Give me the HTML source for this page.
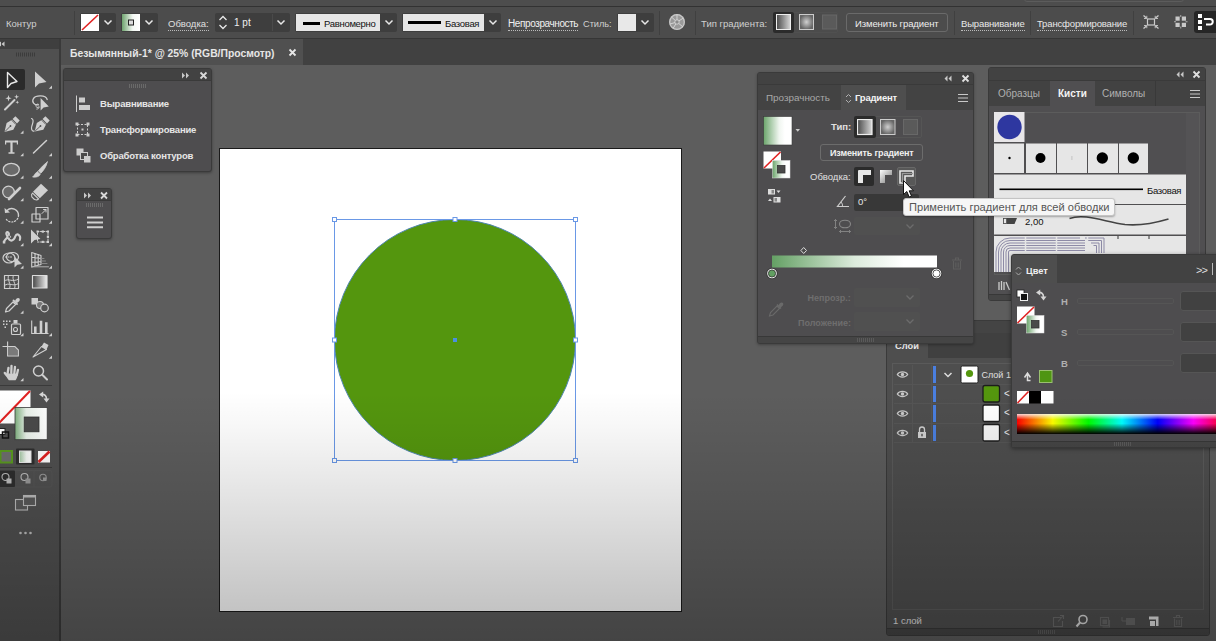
<!DOCTYPE html>
<html lang="ru">
<head>
<meta charset="utf-8">
<title>Illustrator</title>
<style>
*{box-sizing:border-box;margin:0;padding:0}
html,body{width:1216px;height:641px;overflow:hidden;background:#5d5d5d;font-family:"Liberation Sans",sans-serif;font-size:10px;color:#e0e0e0}
.abs{position:absolute}
#app{position:relative;width:1216px;height:641px;overflow:hidden;background:#5d5d5d}
.t{position:absolute;white-space:nowrap;line-height:12px}
/* top */
#strip{left:0;top:0;width:1216px;height:7px;background:#4d4d4d;border-bottom:1px solid #323232}
#ctrl{left:0;top:7px;width:1216px;height:31px;background:#4c4c4c}
#tabs{left:0;top:38px;width:1216px;height:27px;background:#414141;border-top:1px solid #363636}
#tab1{left:61px;top:39px;width:242px;height:26px;background:#505050}
#tools{left:0;top:39px;width:61px;height:602px;background:#505050;border-right:2px solid #3a3a3a}
#toolshead{left:0;top:39px;width:59px;height:10px;background:#3f3f3f}
.dd{position:absolute;background:#3e3e3e;border-radius:2px}
.sep{position:absolute;width:1px;background:#404040;top:11px;height:24px}
.panel{position:absolute;background:#4e4d4f;border:1px solid #3a3a3a;border-radius:3px}
.phead{position:absolute;left:0;top:0;right:0;background:#424242;border-bottom:1px solid #3a3a3a}
.dot{border-bottom:1px dotted #bbb}
</style>
</head>
<body>
<div id="app">

<!-- canvas / artboard -->
<div class="abs" id="artboard" style="left:219px;top:148px;width:463px;height:464px;border:1px solid #1a1a1a;background:#fff"></div>
<svg class="abs" style="left:320px;top:205px" width="270" height="270" viewBox="320 205 270 270">
  <circle cx="455" cy="340" r="120.5" fill="#54960e"/>
  <circle cx="455" cy="340" r="120.5" fill="none" stroke="#4f86b0" stroke-width="1"/>
  <rect x="334.5" y="219.500" width="241" height="241" fill="none" stroke="#6a98e6" stroke-width="1"/>
  <g fill="#fff" stroke="#6a98e6" stroke-width="1">
    <rect x="332.500" y="217.500" width="4" height="4"/><rect x="453" y="217.500" width="4" height="4"/><rect x="573.500" y="217.500" width="4" height="4"/>
    <rect x="332.500" y="338" width="4" height="4"/><rect x="573.500" y="338" width="4" height="4"/>
    <rect x="332.500" y="458.500" width="4" height="4"/><rect x="453" y="458.500" width="4" height="4"/><rect x="573.500" y="458.500" width="4" height="4"/>
  </g>
  <rect x="453" y="338" width="4" height="4" fill="#4a90e2"/>
</svg>

<!-- top bars -->
<div class="abs" id="strip"></div>
<div class="abs" id="ctrl"></div>
<div class="abs" id="tabs"></div>
<div class="abs" id="tab1"></div>
<div class="abs" id="tools"></div>
<div class="abs" id="toolshead"></div>

<!-- CONTROL BAR -->
<div class="t" style="left:6px;top:18px;font-size:9.500px;color:#d0d0d0">Контур</div>
<div class="sep" style="left:74px"></div>
<!-- fill swatch -->
<div class="dd" style="left:80px;top:13px;width:36px;height:19px"></div>
<svg class="abs" style="left:81px;top:14px" width="18" height="17"><rect width="18" height="17" fill="#fff"/><line x1="1" y1="16" x2="17" y2="1" stroke="#e02020" stroke-width="1.6"/></svg>
<svg class="abs chev" style="left:103px;top:19px" width="10" height="7"><path d="M1.500 1.500 L5 5 L8.500 1.500" fill="none" stroke="#e8e8e8" stroke-width="1.500"/></svg>
<!-- stroke swatch -->
<div class="dd" style="left:121px;top:13px;width:37px;height:19px"></div>
<svg class="abs" style="left:122px;top:14px" width="18" height="17"><defs><linearGradient id="gw"><stop offset="0" stop-color="#6fa46f"/><stop offset="0.6" stop-color="#f4f8f4"/><stop offset="1" stop-color="#fff"/></linearGradient></defs><rect width="18" height="17" fill="url(#gw)"/><rect x="6.500" y="6" width="5" height="5" fill="#ddd" stroke="#222" stroke-width="1"/></svg>
<svg class="abs chev" style="left:144px;top:19px" width="10" height="7"><path d="M1.500 1.500 L5 5 L8.500 1.500" fill="none" stroke="#e8e8e8" stroke-width="1.500"/></svg>
<div class="t dot" style="left:168px;top:18px;font-size:9.500px;color:#e0e0e0">Обводка:</div>
<!-- spinner -->
<div class="dd" style="left:215px;top:13px;width:75px;height:19px"></div>
<div class="abs" style="left:272px;top:14px;width:1px;height:17px;background:#4a4a4a"></div>
<svg class="abs" style="left:218px;top:14px" width="10" height="17"><path d="M1.500 6 L5 2.500 L8.500 6 M1.500 11 L5 14.500 L8.500 11" fill="none" stroke="#e8e8e8" stroke-width="1.300"/></svg>
<div class="t" style="left:234px;top:17px;font-size:10px;color:#eee">1 pt</div>
<svg class="abs chev" style="left:276px;top:19px" width="10" height="7"><path d="M1.500 1.500 L5 5 L8.500 1.500" fill="none" stroke="#e8e8e8" stroke-width="1.500"/></svg>
<!-- Равномерно -->
<div class="dd" style="left:295px;top:13px;width:102px;height:19px"></div>
<div class="abs" style="left:296px;top:14px;width:84px;height:17px;background:#e6e6e6"></div>
<div class="abs" style="left:303px;top:22px;width:17px;height:3px;background:#000"></div>
<div class="t" style="left:324px;top:18px;font-size:9.500px;color:#111;letter-spacing:-0.300px">Равномерно</div>
<svg class="abs chev" style="left:384px;top:19px" width="10" height="7"><path d="M1.500 1.500 L5 5 L8.500 1.500" fill="none" stroke="#e8e8e8" stroke-width="1.500"/></svg>
<!-- Базовая -->
<div class="dd" style="left:402px;top:13px;width:99px;height:19px"></div>
<div class="abs" style="left:403px;top:14px;width:81px;height:17px;background:#e6e6e6"></div>
<div class="abs" style="left:408px;top:21px;width:33px;height:3px;background:#000"></div>
<div class="t" style="left:445px;top:18px;font-size:9.500px;color:#111;letter-spacing:-0.300px">Базовая</div>
<svg class="abs chev" style="left:488px;top:19px" width="10" height="7"><path d="M1.500 1.500 L5 5 L8.500 1.500" fill="none" stroke="#e8e8e8" stroke-width="1.500"/></svg>
<div class="t dot" style="left:508px;top:18px;font-size:10px;color:#f0f0f0;letter-spacing:-0.400px">Непрозрачность</div>
<div class="t" style="left:583px;top:18px;font-size:9.200px;color:#d0d0d0">Стиль:</div>
<div class="dd" style="left:617px;top:13px;width:37px;height:19px"></div>
<div class="abs" style="left:618px;top:14px;width:18px;height:17px;background:#e8e8e8"></div>
<svg class="abs chev" style="left:640px;top:19px" width="10" height="7"><path d="M1.500 1.500 L5 5 L8.500 1.500" fill="none" stroke="#e8e8e8" stroke-width="1.500"/></svg>
<div class="sep" style="left:659px"></div>
<svg class="abs" style="left:668px;top:13px" width="18" height="18"><circle cx="9" cy="9" r="8" fill="#9a9a9a"/><circle cx="9" cy="9" r="7.300" fill="none" stroke="#c8c8c8" stroke-width="1.200"/><path d="M9 9 L9 1.500 M9 9 L15.500 5 M9 9 L15 14 M9 9 L5 15.500 M9 9 L2 11 M9 9 L3.500 4" stroke="#d8d8d8" stroke-width="0.900"/><circle cx="9" cy="9" r="2.200" fill="#8a8a8a" stroke="#ddd" stroke-width="0.800"/></svg>
<div class="sep" style="left:695px"></div>
<div class="t" style="left:701px;top:18px;font-size:9.500px;color:#d0d0d0">Тип градиента:</div>
<div class="abs" style="left:773px;top:12px;width:65px;height:21px;border:1px solid #505050;border-radius:2px"></div>
<div class="abs" style="left:773px;top:12px;width:21px;height:21px;background:#2b2b2b;border-radius:2px"></div>
<svg class="abs" style="left:776px;top:14px" width="62" height="17"><defs><linearGradient id="lg1"><stop offset="0" stop-color="#4a4a4a"/><stop offset="1" stop-color="#d8d8d8"/></linearGradient><radialGradient id="rg1"><stop offset="0" stop-color="#d0d0d0"/><stop offset="1" stop-color="#666"/></radialGradient></defs><rect x="0.500" y="0.500" width="14" height="15" fill="url(#lg1)" stroke="#eee" stroke-width="1"/><rect x="23.500" y="0.500" width="14" height="15" fill="url(#rg1)" stroke="#ccc" stroke-width="1"/><rect x="46.500" y="1" width="14" height="14" fill="#5a5a5a" stroke="#666" stroke-width="1"/></svg>
<div class="abs" style="left:846px;top:13px;width:102px;height:19px;border:1px solid #6a6a6a;border-radius:3px"></div>
<div class="t" style="left:855px;top:18px;font-size:9.500px;color:#eee;letter-spacing:-0.100px">Изменить градиент</div>
<div class="sep" style="left:954px"></div>
<div class="t dot" style="left:961px;top:18px;font-size:9.500px;color:#e8e8e8;letter-spacing:-0.150px">Выравнивание</div>
<div class="sep" style="left:1030px"></div>
<div class="t dot" style="left:1037px;top:18px;font-size:9.500px;color:#e8e8e8;letter-spacing:-0.150px">Трансформирование</div>
<div class="sep" style="left:1133px"></div>
<svg class="abs" style="left:1142px;top:14px" width="18" height="17"><rect x="5.500" y="5" width="7" height="6" fill="none" stroke="#ccc" stroke-width="1.200"/><path d="M1.500 1.500 L4.500 4 M16.500 1.500 L13.500 4 M1.500 14.500 L4.500 12 M16.500 14.500 L13.500 12" stroke="#ccc" stroke-width="1.300"/><path d="M2 4.500 L4.800 4.500 L4.800 1.800 M16 4.500 L13.200 4.500 L13.200 1.800 M2 11.500 L4.800 11.500 L4.800 14.200 M16 11.500 L13.200 11.500 L13.200 14.200" fill="none" stroke="#ccc" stroke-width="0.900"/></svg>
<svg class="abs" style="left:1174px;top:15px" width="14" height="14"><g fill="#c8c8c8"><rect x="1.500" y="1.500" width="4.200" height="4.200"/><rect x="7.800" y="1.500" width="4.200" height="4.200"/><rect x="1.500" y="7.800" width="4.200" height="4.200"/><rect x="7.800" y="7.800" width="4.200" height="4.200"/></g><path d="M6.750 0 v2 M6.750 11.500 v2 M0 6.750 h2 M11.500 6.750 h2" stroke="#c8c8c8" stroke-width="0.800"/></svg>
<div class="abs" style="left:1194px;top:11px;width:22px;height:22px;background:#262626;border-radius:3px 0 0 3px"></div>
<svg class="abs" style="left:1196px;top:13px" width="20" height="18"><g fill="#fff"><rect x="2" y="1" width="4" height="4"/><rect x="2" y="7" width="4" height="4"/><rect x="2" y="13" width="4" height="4"/></g><path d="M8 6 L14 6 A2.500 2.500 0 0 1 14 11.500 L10 11.500" fill="none" stroke="#fff" stroke-width="2"/></svg>
<!-- search box partial in top strip -->
<div class="abs" style="left:1024px;top:-8px;width:160px;height:10px;border:1px solid #5c5c5c;border-radius:3px"></div>

<div class="t" style="left:70px;top:48px;font-size:10.350px;font-weight:bold;color:#e6e6e6">Безымянный-1* @ 25% (RGB/Просмотр)</div>
<svg class="abs" style="left:288px;top:48px" width="9" height="9"><path d="M1.500 1.500 L7.500 7.500 M7.500 1.500 L1.500 7.500" stroke="#e6e6e6" stroke-width="1.800"/></svg>

<!-- LEFT FLOATING PANEL 1 -->
<div class="panel" style="left:63px;top:68px;width:149px;height:104px;box-shadow:0 1px 3px rgba(0,0,0,.35)">
  <div class="phead" style="height:12px;border-radius:2px 2px 0 0"></div>
  <svg class="abs" style="left:117px;top:2px" width="30" height="9"><path d="M1 1.500 L4 4.500 L1 7.500 Z M5 1.500 L8 4.500 L5 7.500 Z" fill="#c8c8c8"/><path d="M19.500 1.500 L25.500 7.500 M25.500 1.500 L19.500 7.500" stroke="#d8d8d8" stroke-width="1.800"/></svg>
  <svg class="abs" style="left:64px;top:15px" width="20" height="5"><path d="M1.500 0v4M3.500 0v4M5.500 0v4M7.500 0v4M9.500 0v4M11.500 0v4M13.500 0v4M15.500 0v4M17.500 0v4" stroke="#6a6a6a" stroke-width="1"/></svg>
  <svg class="abs" style="left:11px;top:26px" width="18" height="18"><path d="M1.500 0.500 V17" stroke="#ccc" stroke-width="1"/><rect x="4" y="2.500" width="6" height="5" fill="#ccc"/><rect x="4" y="10" width="11" height="5" fill="#ccc"/></svg>
  <div class="t" style="left:36px;top:29px;font-size:9.500px;font-weight:bold;color:#e6e6e6;letter-spacing:-0.200px">Выравнивание</div>
  <svg class="abs" style="left:10px;top:52px" width="18" height="18"><rect x="3.500" y="3.500" width="10" height="10" fill="none" stroke="#ccc" stroke-width="1" stroke-dasharray="2 1.500"/><g fill="#ccc"><rect x="1.500" y="1.500" width="3" height="3"/><rect x="12.500" y="1.500" width="3" height="3"/><rect x="1.500" y="12.500" width="3" height="3"/><rect x="12.500" y="12.500" width="3" height="3"/><rect x="7.500" y="7.500" width="2" height="2"/></g></svg>
  <div class="t" style="left:36px;top:55px;font-size:9.500px;font-weight:bold;color:#e6e6e6;letter-spacing:-0.200px">Трансформирование</div>
  <svg class="abs" style="left:11px;top:78px" width="18" height="18"><rect x="1.500" y="1.500" width="7" height="7" fill="#ccc"/><rect x="5.500" y="5.500" width="7" height="7" fill="#4a4a4a" stroke="#ccc" stroke-width="1"/><rect x="9" y="9" width="6.500" height="6.500" fill="#ccc"/></svg>
  <div class="t" style="left:36px;top:81px;font-size:9.500px;font-weight:bold;color:#e6e6e6;letter-spacing:-0.200px">Обработка контуров</div>
</div>
<!-- LEFT FLOATING PANEL 2 -->
<div class="panel" style="left:76px;top:188px;width:36px;height:51px;box-shadow:0 1px 3px rgba(0,0,0,.35)">
  <div class="phead" style="height:12px;border-radius:2px 2px 0 0"></div>
  <svg class="abs" style="left:6px;top:2px" width="28" height="9"><path d="M1 1.500 L4 4.500 L1 7.500 Z M5 1.500 L8 4.500 L5 7.500 Z" fill="#c8c8c8"/><path d="M18 1.500 L24 7.500 M24 1.500 L18 7.500" stroke="#d8d8d8" stroke-width="1.800"/></svg>
  <svg class="abs" style="left:8px;top:14px" width="20" height="5"><path d="M1.500 0v4M3.500 0v4M5.500 0v4M7.500 0v4M9.500 0v4M11.500 0v4M13.500 0v4M15.500 0v4M17.500 0v4" stroke="#6a6a6a" stroke-width="1"/></svg>
  <svg class="abs" style="left:9px;top:26px" width="18" height="14"><path d="M1 2.500 H17 M1 7.500 H17 M1 12.200 H17" stroke="#d0d0d0" stroke-width="2"/></svg>
</div>

<!-- LAYERS PANEL -->
<div class="panel" id="layers" style="left:886px;top:320px;width:324px;height:316px;border-radius:3px;background:#4e4e4e">
  <div class="abs" style="left:0;top:0;width:322px;height:12px;background:#444;border-radius:2px 2px 0 0"></div>
  <div class="abs" style="left:0;top:12px;width:322px;height:25px;background:#404040"></div>
  <div class="abs" style="left:0;top:12px;width:41px;height:25px;background:#4e4e4e"></div>
  <div class="abs" id="layin" style="left:0;top:10px;width:322px;height:304px">
  <div class="t" style="left:8px;top:9px;font-size:9.300px;font-weight:bold;color:#f0f0f0">Слои</div>
  <div class="abs" style="left:5px;top:32px;width:312px;height:247px;border:1px solid #5a5a5a"></div>
  <!-- rows -->
  <div class="abs" style="left:7px;top:53px;width:309px;height:1px;background:#555"></div>
  <div class="abs" style="left:7px;top:72px;width:309px;height:1px;background:#555"></div>
  <div class="abs" style="left:7px;top:92px;width:309px;height:1px;background:#555"></div>
  <div class="abs" style="left:7px;top:111px;width:309px;height:1px;background:#555"></div>
  <div class="abs" style="left:25px;top:34px;width:1px;height:77px;background:#555"></div>
  <div class="abs" style="left:44px;top:34px;width:1px;height:77px;background:#555"></div>
  <div class="abs" style="left:46px;top:35px;width:3px;height:17px;background:#4a7fe0"></div>
  <div class="abs" style="left:46px;top:55px;width:3px;height:16px;background:#4a7fe0"></div>
  <div class="abs" style="left:46px;top:74px;width:3px;height:17px;background:#4a7fe0"></div>
  <div class="abs" style="left:46px;top:94px;width:3px;height:16px;background:#4a7fe0"></div>
  <svg class="abs" style="left:0;top:30px" width="130" height="85">
    <defs><g id="eye"><path d="M-5.200 0 C-3 -3.400 3 -3.400 5.200 0 C3 3.400 -3 3.400 -5.200 0 Z" fill="none" stroke="#c8c8c8" stroke-width="1.200"/><circle cx="0" cy="0" r="1.700" fill="#c8c8c8"/></g></defs>
    <use href="#eye" x="15.500" y="13.500"/><use href="#eye" x="15.500" y="33"/><use href="#eye" x="15.500" y="52.500"/><use href="#eye" x="15.500" y="72"/>
    <path d="M32.500 71 v-2.500 a2.500 2.500 0 0 1 5 0 v2.500" fill="none" stroke="#cfcfcf" stroke-width="1.300"/><rect x="31" y="71" width="8" height="6" fill="#cfcfcf"/><rect x="34.300" y="72.800" width="1.400" height="2.500" fill="#4a4a4a"/>
    <path d="M57.500 12 L61 15.500 L64.500 12" fill="none" stroke="#ddd" stroke-width="1.500"/>
    <rect x="74" y="5" width="17" height="17" rx="1.500" fill="#fff" stroke="#222" stroke-width="1"/><circle cx="82.500" cy="12.500" r="3.600" fill="#54960e"/>
    <rect x="96" y="24.500" width="16.500" height="16.500" rx="2" fill="#54960e" stroke="#1c1c1c" stroke-width="1.300"/>
    <rect x="96" y="44" width="16.500" height="16.500" rx="1.500" fill="#fff" stroke="#1c1c1c" stroke-width="1.300"/>
    <rect x="96" y="63.500" width="16.500" height="16.500" rx="1.500" fill="#f4f4f4" stroke="#1c1c1c" stroke-width="1.300"/>
  </svg>
  <div class="t" style="left:94.500px;top:38px;font-size:9px;color:#e0e0e0">Слой 1</div>
  <div class="t" style="left:117px;top:57px;font-size:10px;color:#e8e8e8;width:6px;overflow:hidden">&lt;Эллипс&gt;</div>
  <div class="t" style="left:117px;top:76px;font-size:10px;color:#e8e8e8;width:6px;overflow:hidden">&lt;Контур&gt;</div>
  <div class="t" style="left:117px;top:96px;font-size:10px;color:#e8e8e8;width:6px;overflow:hidden">&lt;Контур&gt;</div>
  <div class="t" style="left:6px;top:284px;font-size:9.500px;color:#e0e0e0">1 слой</div>
  <svg class="abs" style="left:160px;top:281px" width="150" height="18">
    <g fill="none" stroke="#6a6a6a" stroke-width="1.100"><path d="M14 5.500 H6.500 V14.500 H15.500 V9"/><path d="M11 9.500 L16.500 3.500 M13 3.500 H16.500 V7"/></g>
    <circle cx="36" cy="7.500" r="4" fill="none" stroke="#d8d8d8" stroke-width="1.600"/><path d="M33 10.500 L29.500 14.500" stroke="#d8d8d8" stroke-width="2"/>
    <g fill="none" stroke="#666" stroke-width="1.100"><rect x="53.500" y="5.500" width="8" height="8"/><rect x="56" y="8" width="3.500" height="3.500" fill="#666"/><path d="M62.500 8 v7 h-7"/></g>
    <g fill="#666"><path d="M75 5 v4 h4" fill="none" stroke="#666"/><rect x="79" y="6" width="9" height="7"/></g>
    <path d="M102 4.500 H111.500 V14 H109 V7.500 H102 Z" fill="#e0e0e0"/><path d="M103 9 H108 V14 H103 Z" fill="#e0e0e0"/>
    <g fill="none" stroke="#666" stroke-width="1.100"><path d="M127.500 6.500 V14.500 H134.500 V6.500 M126 5.500 H136 M129.500 5 V3.500 H132.500 V5 M129.800 8 V13 M132.200 8 V13"/></g>
  </svg>
  <div class="abs" style="left:0;top:297px;width:322px;height:7px;background:#444;border-top:1px solid #383838;border-radius:0 0 3px 3px"></div>
  <svg class="abs" style="left:150px;top:299px" width="20" height="4"><path d="M1.500 0v4M3.500 0v4M5.500 0v4M7.500 0v4M9.500 0v4M11.500 0v4M13.500 0v4M15.500 0v4M17.500 0v4" stroke="#5a5a5a" stroke-width="1"/></svg>
  </div>
</div>

<!-- BRUSHES PANEL -->
<div class="panel" id="brushes" style="left:988px;top:67px;width:218px;height:234px;background:#504f51">
  <div class="phead" style="height:13px;border-radius:2px 2px 0 0"></div>
  <div class="abs" style="left:0;top:13px;width:216px;height:25px;background:#424242"></div>
  <div class="abs" style="left:61px;top:13px;width:45px;height:25px;background:#504f51"></div>
  <div class="abs" style="left:166px;top:13px;width:1px;height:25px;background:#393939"></div>
  <svg class="abs" style="left:186px;top:2px" width="28" height="10"><path d="M4.500 1.500 L1.500 4.500 L4.500 7.500 Z M8.500 1.500 L5.500 4.500 L8.500 7.500 Z" fill="#c8c8c8"/><path d="M18.500 1.500 L24.500 7.500 M24.500 1.500 L18.500 7.500" stroke="#e0e0e0" stroke-width="1.800"/></svg>
  <div class="t" style="left:9px;top:20px;font-size:10px;color:#b0b0b0">Образцы</div>
  <div class="t" style="left:69px;top:20px;font-size:10px;font-weight:bold;color:#f4f4f4">Кисти</div>
  <div class="t" style="left:113px;top:20px;font-size:10px;color:#b0b0b0">Символы</div>
  <svg class="abs" style="left:200px;top:21px" width="12" height="10"><path d="M1 1.500 H11 M1 5 H11 M1 8.500 H11" stroke="#c8c8c8" stroke-width="1.200"/></svg>
  <!-- list -->
  <div class="abs" style="left:5px;top:44px;width:206px;height:163px;border:1px solid #5c5c5c"></div>
  <div class="abs" style="left:197px;top:45px;width:13px;height:161px;background:#545355"></div>
  <svg class="abs" style="left:5px;top:44px" width="194" height="160" viewBox="994 112 194 160">
    <rect x="994" y="112" width="30.500" height="30" fill="#e8e6e8"/>
    <circle cx="1009.500" cy="127" r="12.200" fill="#2e37a0"/>
    <g fill="#e6e6e6"><rect x="994" y="143.500" width="30" height="29.500"/><rect x="1026" y="143.500" width="30" height="29.500"/><rect x="1057" y="143.500" width="30" height="29.500"/><rect x="1088" y="143.500" width="30" height="29.500"/><rect x="1119" y="143.500" width="29" height="29.500"/></g>
    <circle cx="1009.500" cy="158" r="1.200" fill="#000"/><circle cx="1040.500" cy="158" r="5" fill="#000"/><rect x="1071.500" y="156" width="0.800" height="4" fill="#bbb"/><circle cx="1102.300" cy="158" r="5.700" fill="#000"/><circle cx="1133.300" cy="158" r="5.700" fill="#000"/>
    <rect x="994" y="174.500" width="192" height="29.500" fill="#e6e6e6"/>
    <rect x="999.500" y="188.500" width="143.500" height="1.600" fill="#000"/>
    <rect x="994" y="205" width="192" height="29.500" fill="#e6e6e6"/>
    <path d="M1003 218 H1017 L1014.500 224 H1003 Z" fill="#444"/><rect x="1003.500" y="218.500" width="3" height="5" fill="#e6e6e6" stroke="#444" stroke-width="0.600"/>
    <path d="M1069.500 218.500 C1085 213 1105 222 1125 224.500 C1140 226 1155 223 1168.500 219" fill="none" stroke="#444" stroke-width="1.600"/>
    <rect x="994" y="236" width="192" height="36" fill="#e6e6e6"/>
    <g fill="none" stroke="#8d8aa6" stroke-width="1">
      <path d="M996 272 V252 A14 14 0 0 1 1010 238 H1080"/><path d="M998.500 272 V252 A11.500 11.500 0 0 1 1010 240.500 H1085"/><path d="M1001 272 V252 A9 9 0 0 1 1010 243 H1085"/><path d="M1003.500 272 V252 A6.500 6.500 0 0 1 1010 245.500 H1085"/><path d="M1006 272 V252 A4 4 0 0 1 1010 248 H1085"/><path d="M1008.500 272 V252 A1.500 1.500 0 0 1 1010 250.500 H1085"/>
      <path d="M1085 238 H1104 V253 M1088 240.500 H1101.500 V253 M1091 243 H1099 V253 M1093.500 245.500 H1096.500 V253"/>
    </g>
    <g stroke="#e6e6e6" stroke-width="1.500"><path d="M1025.500 237 V253 M1056.500 237 V253 M1087.500 237 V253"/></g>
    <g stroke="#333" stroke-width="1"><path d="M1118 236 V239 M1149 236 V239"/></g>
  </svg>
  <div class="t" style="left:158px;top:117px;font-size:9.500px;color:#111;letter-spacing:-0.300px">Базовая</div>
  <div class="t" style="left:36px;top:148px;font-size:9.500px;color:#111">2,00</div>
  <div class="abs" style="left:0;top:226px;width:216px;height:6px;background:#454545;border-top:1px solid #383838;border-radius:0 0 2px 2px"></div>
  <svg class="abs" style="left:9px;top:211px" width="14" height="12"><path d="M1 11 V3 M3.500 11 V2 M6 11 V3 M8 3 L11.500 11" stroke="#ccc" stroke-width="1.300" fill="none"/></svg>
</div>

<!-- GRADIENT PANEL -->
<div class="panel" id="gradp" style="left:757px;top:72px;width:217px;height:272px;box-shadow:0 1px 3px rgba(0,0,0,.3)">
  <div class="phead" style="height:12px;border-radius:2px 2px 0 0"></div>
  <div class="abs" style="left:0;top:-1px;width:215px;height:271px">
  <div class="abs" style="left:0;top:13px;width:215px;height:25px;background:#434343"></div>
  <div class="abs" style="left:83px;top:13px;width:65px;height:25px;background:#4e4e4e"></div>
  <svg class="abs" style="left:185px;top:2px" width="28" height="10"><path d="M4.500 1.500 L1.500 4.500 L4.500 7.500 Z M8.500 1.500 L5.500 4.500 L8.500 7.500 Z" fill="#c8c8c8"/><path d="M19.500 1.500 L25.500 7.500 M25.500 1.500 L19.500 7.500" stroke="#e0e0e0" stroke-width="1.800"/></svg>
  <div class="t" style="left:8px;top:20px;font-size:9.900px;color:#a8a8a8">Прозрачность</div>
  <svg class="abs" style="left:87px;top:21px" width="7" height="11"><path d="M1 4 L3.500 1.500 L6 4 M1 7 L3.500 9.500 L6 7" fill="none" stroke="#b0b0b0" stroke-width="1"/></svg>
  <div class="t" style="left:97px;top:20px;font-size:9.500px;font-weight:bold;color:#f4f4f4;letter-spacing:-0.200px">Градиент</div>
  <svg class="abs" style="left:199px;top:21px" width="12" height="10"><path d="M1 1.500 H11 M1 5 H11 M1 8.500 H11" stroke="#c8c8c8" stroke-width="1.200"/></svg>
  <!-- swatch -->
  <svg class="abs" style="left:4.500px;top:44px" width="40" height="95">
    <defs><linearGradient id="gp1"><stop offset="0" stop-color="#6ba56b"/><stop offset="0.550" stop-color="#f0f6f0"/><stop offset="0.750" stop-color="#fff"/></linearGradient></defs>
    <rect x="0.500" y="0.500" width="28.500" height="28.500" fill="url(#gp1)" stroke="#3a3a3a" stroke-width="0.600"/>
    <path d="M32.500 13 h4.500 l-2.250 2.800 z" fill="#ccc"/>
    <rect x="0.500" y="35.500" width="17.500" height="17" fill="#fff"/><path d="M1 52 L17.500 36" stroke="#e02020" stroke-width="1.600"/>
    <rect x="9.500" y="44.500" width="17.500" height="17.500" fill="url(#gp1)" stroke="#ddd" stroke-width="0.500"/>
    <rect x="14.500" y="49.500" width="7.500" height="7.500" fill="#4a4a4a" stroke="#333" stroke-width="0.800"/>
    <g><rect x="5.500" y="73.500" width="6" height="4.500" fill="#888" stroke="#ddd" stroke-width="1"/><rect x="5.500" y="73.500" width="3" height="4.500" fill="#ddd"/><path d="M13.500 74.500 h4 l-2 2.500z" fill="#ddd"/>
    <rect x="11" y="81.500" width="6" height="4.500" fill="#888" stroke="#ddd" stroke-width="1"/><rect x="14" y="81.500" width="3" height="4.500" fill="#ddd"/><path d="M5 85 h4 l-2 -2.500z" fill="#ddd"/></g>
  </svg>
  <div class="t" style="left:73px;top:49px;font-size:9.500px;font-weight:bold;color:#e0e0e0">Тип:</div>
  <div class="abs" style="left:96px;top:44px;width:68px;height:22px;border:1px solid #555;border-radius:2px"></div>
  <div class="abs" style="left:96px;top:44px;width:22px;height:22px;background:#2b2b2b;border-radius:2px"></div>
  <svg class="abs" style="left:99px;top:47px" width="64" height="17"><rect x="0.500" y="0.500" width="14.500" height="15" fill="url(#lg1)" stroke="#eee" stroke-width="1.200"/><rect x="23.500" y="0.500" width="14.500" height="15" fill="url(#rg1)" stroke="#ccc" stroke-width="1"/><rect x="46.500" y="0.500" width="14" height="15" fill="#5a5a5a" stroke="#686868" stroke-width="1"/></svg>
  <div class="abs" style="left:62px;top:72px;width:103px;height:17px;border:1px solid #6c6c6c;border-radius:3px"></div>
  <div class="t" style="left:72px;top:75px;font-size:9px;font-weight:bold;color:#f0f0f0;letter-spacing:-0.150px">Изменить градиент</div>
  <div class="t" style="left:52px;top:99px;font-size:9.500px;color:#e0e0e0">Обводка:</div>
  <div class="abs" style="left:96px;top:95px;width:20px;height:19px;background:#2b2b2b;border-radius:2px"></div>
  <div class="abs" style="left:139px;top:95px;width:19px;height:19px;background:#585858;border:1px solid #686868;border-radius:2px"></div>
  <svg class="abs" style="left:98px;top:96px" width="62" height="17">
    <defs><linearGradient id="sg1" x1="0" y1="0" x2="1" y2="1"><stop offset="0" stop-color="#fff"/><stop offset="1" stop-color="#777"/></linearGradient></defs>
    <path d="M2 15 V3 Q2 2 3 2 H15 V7 H7 V15 Z" fill="#e8e8e8"/>
    <path d="M24 15 V2 H36 V7 H29 V15 Z" fill="url(#sg1)"/>
    <path d="M44 15 V3 H57 V8 H49 V15 Z" fill="none" stroke="#e8e8e8" stroke-width="1.600"/><path d="M46.500 15 V5.500 H57" fill="none" stroke="#999" stroke-width="1.200"/>
  </svg>
  <svg class="abs" style="left:78px;top:122px" width="16" height="14"><path d="M13 12.500 H1.500 L9.500 2" fill="none" stroke="#ccc" stroke-width="1.200"/><path d="M6.500 12.500 A5 5 0 0 0 5 8" fill="none" stroke="#ccc" stroke-width="1"/></svg>
  <div class="abs" style="left:96px;top:122px;width:65px;height:17px;background:#383838;border-radius:2px"></div>
  <div class="t" style="left:100px;top:124px;font-size:9.500px;color:#e8e8e8">0°</div>
  <svg class="abs" style="left:75px;top:146px" width="20" height="16"><ellipse cx="12" cy="6" rx="5.500" ry="3.800" fill="none" stroke="#888" stroke-width="1.100"/><path d="M2.500 1.500 V10.500 M1 3 L2.500 1.500 L4 3 M1 9 L2.500 10.500 L4 9 M6.500 13.500 H17.500 M8 12 L6.500 13.500 L8 15 M16 12 L17.500 13.500 L16 15" fill="none" stroke="#888" stroke-width="0.900"/></svg>
  <div class="abs" style="left:96px;top:145px;width:66px;height:18px;background:#505050;border-radius:2px"></div>
  <svg class="abs" style="left:147px;top:151px" width="10" height="7"><path d="M1.500 1.500 L5 5 L8.500 1.500" fill="none" stroke="#6c6c6c" stroke-width="1.300"/></svg>
  <!-- slider -->
  <svg class="abs" style="left:0;top:169px" width="215" height="45">
    <defs><linearGradient id="gp2"><stop offset="0" stop-color="#64a064"/><stop offset="0.500" stop-color="#dcebdc"/><stop offset="0.800" stop-color="#fff"/></linearGradient></defs>
    <path d="M45.700 6.500 L48.500 9.500 L45.700 12.500 L42.900 9.500 Z" fill="#4a4a4a" stroke="#ddd" stroke-width="1"/>
    <rect x="14" y="14.500" width="165" height="12" fill="url(#gp2)"/>
    <circle cx="14" cy="32.500" r="5.800" fill="#3a3a3a"/><circle cx="14" cy="32.500" r="4.800" fill="#fff"/><circle cx="14" cy="32.500" r="3.600" fill="#62a062" stroke="#2a2a2a" stroke-width="0.800"/>
    <circle cx="178.500" cy="32.500" r="5.800" fill="#3a3a3a"/><circle cx="178.500" cy="32.500" r="4.800" fill="#fff"/><circle cx="178.500" cy="32.500" r="3.600" fill="#fff" stroke="#2a2a2a" stroke-width="0.800"/>
    <g fill="none" stroke="#5e5e5e" stroke-width="1.100"><path d="M195.500 20 V28 H202.500 V20 M194 19 H204 M197.500 18.500 V17 H200.500 V18.500 M197.800 21.500 V26.500 M200.200 21.500 V26.500"/></g>
  </svg>
  <svg class="abs" style="left:9px;top:228px" width="18" height="18"><path d="M2.500 16 L3.500 12.500 L10 6 L12.500 8.500 L6 15 Z" fill="none" stroke="#6a6a6a" stroke-width="1.100"/><path d="M10 4.500 L14 8.500" stroke="#6a6a6a" stroke-width="1.600"/><path d="M11.500 5.500 C12.500 3 14.500 1.500 16 3 C17 4.500 15.500 6.500 13.500 7.500 Z" fill="#6a6a6a"/></svg>
  <div class="t" style="left:49.500px;top:220px;font-size:9px;font-weight:bold;color:#6e6e6e">Непрозр.:</div>
  <div class="abs" style="left:96px;top:216px;width:66px;height:19px;background:#505050;border-radius:2px"></div>
  <svg class="abs" style="left:147px;top:222px" width="10" height="7"><path d="M1.500 1.500 L5 5 L8.500 1.500" fill="none" stroke="#6c6c6c" stroke-width="1.300"/></svg>
  <div class="t" style="left:40px;top:245px;font-size:9px;font-weight:bold;color:#6e6e6e">Положение:</div>
  <div class="abs" style="left:96px;top:240px;width:66px;height:19px;background:#505050;border-radius:2px"></div>
  <svg class="abs" style="left:147px;top:246px" width="10" height="7"><path d="M1.500 1.500 L5 5 L8.500 1.500" fill="none" stroke="#6c6c6c" stroke-width="1.300"/></svg>
  <div class="abs" style="left:0;top:264px;width:215px;height:7px;background:#454545;border-top:1px solid #383838;border-radius:0 0 2px 2px"></div>
  <svg class="abs" style="left:98px;top:266px" width="20" height="4"><path d="M1.500 0v4M3.500 0v4M5.500 0v4M7.500 0v4M9.500 0v4M11.500 0v4M13.500 0v4M15.500 0v4M17.500 0v4" stroke="#5a5a5a" stroke-width="1"/></svg>
</div>
</div>

<!-- COLOR PANEL -->
<div class="panel" id="colorp" style="left:1011px;top:254px;width:215px;height:194px;box-shadow:0 1px 4px rgba(0,0,0,.4)">
  <div class="abs" style="left:0;top:0;width:213px;height:28px;background:#424242"></div>
  <div class="abs" style="left:0;top:0;width:45px;height:28px;background:#4e4e4e;border-radius:2px 0 0 0"></div>
  <svg class="abs" style="left:3px;top:10px" width="7" height="12"><path d="M1 4.500 L3.500 2 L6 4.500 M1 7.500 L3.500 10 L6 7.500" fill="none" stroke="#aaa" stroke-width="1"/></svg>
  <div class="t" style="left:14px;top:10px;font-size:9.200px;font-weight:bold;color:#f0f0f0">Цвет</div>
  <div class="t" style="left:184px;top:9px;font-size:11px;color:#ddd;letter-spacing:-1px">&gt;&gt;</div>
  <div class="abs" style="left:200px;top:8px;width:1px;height:12px;background:#bbb"></div>
  <svg class="abs" style="left:0;top:30px" width="60" height="125">
    <rect x="5" y="5" width="7" height="7" fill="#fff" stroke="#222" stroke-width="0.800"/><rect x="8.500" y="8.500" width="7" height="7" fill="#111" stroke="#eee" stroke-width="1"/>
    <path d="M26.500 7.500 C29.500 7 31.500 9 31.500 12" fill="none" stroke="#d4d4d4" stroke-width="1.600"/><path d="M24 7.500 L28.200 4.500 L28.200 10.500 Z M31.500 15.500 L28.500 11.500 L34.500 11.500 Z" fill="#d4d4d4"/>
    <rect x="5" y="21.500" width="17.500" height="17" fill="#fff"/><path d="M5.500 38 L22 22" stroke="#e02020" stroke-width="1.600"/>
    <rect x="14.500" y="30.500" width="17.500" height="17.500" fill="url(#gp1)" stroke="#ddd" stroke-width="0.500"/>
    <rect x="19.500" y="35.500" width="7.500" height="7.500" fill="#4a4a4a" stroke="#333" stroke-width="0.800"/>
    <path d="M12.500 92.500 L15.500 88 L18.500 92.500 M15.500 88.500 V95.500 H18.500" fill="none" stroke="#ddd" stroke-width="1.500"/>
    <rect x="27.500" y="85.500" width="12.500" height="12" fill="#4f9512" stroke="#9ac070" stroke-width="1"/>
    <rect x="5" y="106" width="12" height="12.500" fill="#fff"/><path d="M5.500 118 L16.500 106.500" stroke="#e02020" stroke-width="1.600"/>
    <rect x="17" y="106" width="12" height="12.500" fill="#000"/><rect x="29" y="106" width="12.500" height="12.500" fill="#fff"/>
  </svg>
  <div class="t" style="left:49px;top:41px;font-size:9.500px;font-weight:bold;color:#b0b0b0">H</div>
  <div class="t" style="left:49px;top:72px;font-size:9.500px;font-weight:bold;color:#b0b0b0">S</div>
  <div class="t" style="left:49px;top:103px;font-size:9.500px;font-weight:bold;color:#b0b0b0">B</div>
  <div class="abs" style="left:65px;top:43px;width:97px;height:6px;border:1px solid #555;border-radius:2px"></div>
  <div class="abs" style="left:65px;top:74px;width:97px;height:6px;border:1px solid #555;border-radius:2px"></div>
  <div class="abs" style="left:65px;top:105px;width:97px;height:6px;border:1px solid #555;border-radius:2px"></div>
  <div class="abs" style="left:168px;top:36px;width:40px;height:20px;background:#414141;border:1px solid #555;border-radius:3px"></div>
  <div class="abs" style="left:168px;top:67px;width:40px;height:20px;background:#414141;border:1px solid #555;border-radius:3px"></div>
  <div class="abs" style="left:168px;top:98px;width:40px;height:20px;background:#414141;border:1px solid #555;border-radius:3px"></div>
  <div class="abs" style="left:5px;top:159px;width:210px;height:20px;background:linear-gradient(to bottom,rgba(255,255,255,0.850) 0%,rgba(255,255,255,0) 28%,rgba(0,0,0,0) 48%,rgba(0,0,0,1) 100%),linear-gradient(to right,#f00 0%,#ff0 17%,#0f0 34%,#0ff 50%,#00f 67%,#f0f 84%,#f00 100%)"></div>
  <div class="abs" style="left:0;top:186px;width:213px;height:6px;background:#454545;border-top:1px solid #383838"></div>
  <svg class="abs" style="left:101px;top:187px" width="20" height="4"><path d="M1.500 0v4M3.500 0v4M5.500 0v4M7.500 0v4M9.500 0v4M11.500 0v4M13.500 0v4M15.500 0v4M17.500 0v4" stroke="#5a5a5a" stroke-width="1"/></svg>
</div>

<!-- TOOLTIP -->
<div class="abs" style="left:903px;top:198px;width:212px;height:18px;background:#f6f6f6;border:1px solid #c4c4c4;border-radius:3px;box-shadow:0 1px 2px rgba(0,0,0,.3)"></div>
<div class="t" style="left:909px;top:201px;font-size:11.100px;color:#555">Применить градиент для всей обводки</div>
<!-- CURSOR -->
<svg class="abs" style="left:901px;top:179px" width="14" height="20"><path d="M2.500 1.500 V15.500 L5.800 12.500 L8.200 18 L10.500 17 L8.200 11.800 H12.500 Z" fill="#fff" stroke="#111" stroke-width="1" stroke-linejoin="round"/></svg>

<!-- TOOLBAR ICONS -->
<div class="abs" style="left:0;top:69px;width:25px;height:21px;background:#2a2a2a;border-radius:0 2px 2px 0"></div>
<svg class="abs" style="left:0;top:39px" width="60" height="602" viewBox="0 39 60 602">
<defs>
<linearGradient id="tg1"><stop offset="0" stop-color="#444"/><stop offset="1" stop-color="#eee"/></linearGradient>
<linearGradient id="tg2"><stop offset="0" stop-color="#7fb07f"/><stop offset="0.35" stop-color="#e8f0e8"/><stop offset="1" stop-color="#fff"/></linearGradient>
<linearGradient id="tg3"><stop offset="0" stop-color="#a4c8a4"/><stop offset="0.600" stop-color="#f4f8f4"/><stop offset="1" stop-color="#fff"/></linearGradient>
</defs>
<g fill="none" stroke="#cfcfcf" stroke-width="1.300" stroke-linecap="round" stroke-linejoin="round">
<!-- head -->
<path d="M1 41.500 L-2 44 L1 46.500 Z M4.500 41.500 L1.500 44 L4.500 46.500 Z" stroke="none" fill="#c8c8c8"/>
<g stroke="#3c3c3c" stroke-width="1" stroke-linecap="butt"><path d="M16.500 52.500v4M18.500 52.500v4M20.500 52.500v4M22.500 52.500v4M24.500 52.500v4M26.500 52.500v4M28.500 52.500v4M30.500 52.500v4M32.500 52.500v4M34.500 52.500v4"/></g>
<!-- r1 selection -->
<path d="M7.500 72.500 L7.500 87.500 L11 83.500 L17 81.500 Z" stroke="#e8e8e8" stroke-width="1.400"/>
<path d="M35 71.500 L35 87.500 L39 83.500 L46.500 82 Z" fill="#cfcfcf" stroke="none"/>
<!-- r2 wand -->
<path d="M5 109.500 L14.500 100" stroke-width="2"/>
<g fill="#cfcfcf" stroke="none">
<path d="M8.500 95 L9.300 97.400 L11.700 98.200 L9.300 99 L8.500 101.400 L7.700 99 L5.300 98.200 L7.700 97.400 Z"/>
<path d="M16.600 94.300 L17.200 96.200 L19.100 96.800 L17.200 97.400 L16.600 99.300 L16 97.400 L14.100 96.800 L16 96.200 Z"/>
<path d="M17.300 100.400 L17.800 101.700 L19.100 102.200 L17.800 102.700 L17.300 104 L16.800 102.700 L15.500 102.200 L16.800 101.700 Z"/>
</g>
<!-- lasso -->
<path d="M38.500 104.800 C34 105.500 31.500 101.500 33.500 98.500 C36 95 45.500 94.800 47.200 99.500" stroke-width="1.300"/>
<path d="M38.300 104.200 a1.700 1.700 0 1 0 0.800 2.300 c0.300 1.500 -0.800 2.500 -2.300 2.600" stroke-width="1"/>
<path d="M40.600 98 L40.600 110.400 L43.600 107.400 L48.800 106.600 Z" fill="#cfcfcf" stroke="none"/>
<!-- r3 pen -->
<path d="M4.500 132 L6.600 123 L12 119.800 L16.300 124 L13.300 129.700 Z" fill="#cfcfcf" stroke="none"/>
<path d="M12.600 119 L15.400 116.300 L19.700 120.600 L17 123.400 Z" fill="#cfcfcf" stroke="none"/>
<path d="M5.200 131.300 L10 126.500" stroke="#505050" stroke-width="0.900"/><circle cx="10.500" cy="126" r="0.900" fill="#505050" stroke="none"/>
<path d="M11.800 120.400 L15.800 124.400" stroke="#505050" stroke-width="0.800"/>
<!-- curvature -->
<path d="M34.700 131.500 L36.800 123 L42 119.800 L46.300 124 L43.300 129.700 Z" fill="#cfcfcf" stroke="none"/>
<path d="M42.600 119 L45.400 116.300 L49.700 120.600 L47 123.400 Z" fill="#cfcfcf" stroke="none"/>
<path d="M35.400 130.800 L40 126.500" stroke="#505050" stroke-width="0.900"/><circle cx="40.500" cy="126" r="0.900" fill="#505050" stroke="none"/>
<path d="M41.800 120.400 L45.800 124.400" stroke="#505050" stroke-width="0.800"/>
<path d="M31.500 118.500 C35.500 120 31.500 124.500 31.500 128 C31.500 130.500 33 131.500 34 131" stroke-width="1.200"/>
<!-- r4 T -->
<path d="M5 144.500 V140.500 H18 V144.500 H16.800 V142.500 H12.600 V152.300 H14.500 V153.800 H8.500 V152.300 H10.400 V142.500 H6.200 V144.500 Z" fill="#cfcfcf" stroke="none"/>
<path d="M33.500 153 L46.500 140.500" stroke-width="1.500"/>
<!-- r5 ellipse -->
<ellipse cx="11.300" cy="169.500" rx="8" ry="6.200" fill="#6a6a6a" stroke-width="1.300"/>
<!-- brush -->
<path d="M47.300 162 C44 164.500 40.500 168 38.300 171 L40.800 173.300 C43.500 170.500 46.500 166.500 47.300 162 Z" fill="#cfcfcf" stroke="#cfcfcf" stroke-width="0.800"/>
<path d="M37.500 171.800 L40.300 174.300 C39 177.200 35.500 177.500 32.500 177 C34.500 175.500 34.800 172.800 37.500 171.800 Z" fill="#cfcfcf" stroke="#cfcfcf" stroke-width="0.600"/>
<!-- r6 shaper -->
<circle cx="8.500" cy="192" r="5.800" fill="#6a6a6a"/>
<path d="M9 199 L20 188" stroke-width="2.600"/>
<!-- eraser -->
<path d="M41 183.700 L48 190.200 L39.800 198.200 L33 191.800 Z" fill="#cfcfcf" stroke="none"/>
<path d="M32.600 193.200 L38.600 199 L36.800 200 L34.500 199.500 L31.800 196.800 L31.600 194.500 Z" fill="none" stroke="#cfcfcf" stroke-width="1.100"/>
<!-- r7 rotate -->
<path d="M7 210.500 A6.800 6.800 0 0 1 18.500 215.500" stroke-width="1.400"/>
<path d="M18.500 215.500 A6.800 6.800 0 0 1 5.500 218" stroke-width="1.200" stroke-dasharray="1.200 1.800"/>
<path d="M4.500 208 L5 213 L10 212.500 Z" fill="#cfcfcf" stroke="none"/>
<!-- scale -->
<rect x="32" y="214" width="8" height="8" stroke-width="1.200"/>
<rect x="36" y="207.500" width="12" height="11.500" stroke-width="1.200"/>
<path d="M42 213.500 L46 209.500 M43.500 209.500 H46 V212" stroke-width="1"/>
<!-- r8 width/warp -->
<path d="M4 241.500 C5.500 238 9.500 237 9 234 C8.500 231 5.500 231.500 6.500 234.500 C8 239 10.500 242.500 13.500 239.500 C16 237 15 233.500 18 234.500 C20 235.500 20.500 238 19.800 240" stroke-width="2.100"/>
<rect x="2.800" y="241" width="2.500" height="2.500" fill="#cfcfcf" stroke="none"/>
<circle cx="9.300" cy="236.800" r="1.300" fill="#505050" stroke="#cfcfcf" stroke-width="0.700"/>
<!-- free transform -->
<path d="M31 229.500 L31 243.500 L34.500 240 L40.500 239 Z" fill="#cfcfcf" stroke="none"/>
<rect x="37.500" y="231.500" width="10.500" height="10.500" stroke-width="1" stroke-dasharray="1.500 1.500"/>
<g fill="#cfcfcf" stroke="none"><rect x="36.500" y="230.500" width="2.200" height="2.200"/><rect x="46.800" y="230.500" width="2.200" height="2.200"/><rect x="46.800" y="240.800" width="2.200" height="2.200"/><rect x="41.700" y="230.500" width="2.200" height="2.200"/><rect x="46.800" y="235.700" width="2.200" height="2.200"/><rect x="41.700" y="240.800" width="2.200" height="2.200"/></g>
<!-- r9 shape builder -->
<ellipse cx="9" cy="258" rx="6" ry="5" stroke-width="1.200"/>
<ellipse cx="12.500" cy="257" rx="6" ry="4.500" stroke-width="1.200"/>
<path d="M5.500 257 h1 M8 257 h1 M10.500 257 h1" stroke-width="1"/>
<path d="M14.500 256.500 L14.500 267.500 L17.300 264.800 L22 264 Z" fill="#cfcfcf" stroke="none"/>
<!-- perspective grid -->
<path d="M31.700 252.500 L41 255.500 V264.500 L31.700 267 Z M31.700 257.300 L41 258.500 M31.700 262.200 L41 261.500 M35 253.600 V266.100 M38.200 254.600 V265.300" stroke-width="1.100"/>
<path d="M41 258.500 h3 M41 261 h4.500 M41 263.500 h6" stroke-width="0.900" stroke="#8c8c8c"/>
<path d="M31.700 266.800 H48.500" stroke-width="1" stroke="#b0b0b0"/>
<!-- r10 mesh -->
<rect x="4.500" y="275.500" width="14" height="13" stroke-width="1.200"/>
<path d="M4.500 281 C8 277.500 12 283 18.500 279 M4.500 285.500 C9 281.500 13 287.500 18.500 283.500 M8.500 275.500 C6.500 280 12 284 9.500 288.500 M13.500 275.500 C11 279.500 17 284 14.500 288.500" stroke-width="1"/>
<!-- gradient -->
<rect x="32.500" y="275.500" width="14.500" height="12.500" fill="url(#tg1)" stroke="#ddd" stroke-width="1.200"/>
<!-- r11 eyedropper -->
<path d="M5.500 312 L6.500 308.500 L13 302 L15.500 304.500 L9 311 Z" stroke-width="1.200"/>
<path d="M13.500 300.500 L17 304" stroke-width="1.800"/>
<path d="M15 301 C16 298.500 18 297 19.500 298.500 C20.500 300 19 302 17 303 Z" fill="#cfcfcf" stroke="none"/>
<!-- blend -->
<rect x="31.500" y="298" width="6.500" height="6.500" fill="#cfcfcf" stroke="none"/>
<circle cx="40" cy="305" r="3.500" fill="#777" stroke-width="1.100"/>
<circle cx="44.500" cy="308" r="3.800" fill="#555" stroke-width="1.200"/>
<!-- r12 spray -->
<rect x="11.500" y="324" width="9" height="10.500" rx="1" stroke-width="1.200"/>
<rect x="13.500" y="320" width="4" height="3.500" fill="#cfcfcf" stroke="none"/>
<circle cx="15.500" cy="329.500" r="2" stroke-width="1.100"/>
<g fill="#cfcfcf" stroke="none"><rect x="3" y="320.500" width="1.500" height="1.500"/><rect x="6" y="320.500" width="1.500" height="1.500"/><rect x="9" y="320.500" width="1.500" height="1.500"/><rect x="3" y="323.500" width="1.500" height="1.500"/><rect x="6" y="323.500" width="1.500" height="1.500"/><rect x="4.500" y="326.500" width="1.500" height="1.500"/></g>
<!-- graph -->
<path d="M31.700 320.500 V333.500 H48.500" stroke-width="1.100" stroke-linecap="butt"/>
<path d="M35.300 333 V326.500 M41 333 V320.800 M46.300 333 V322.200" stroke-width="2.600" stroke-linecap="butt"/>
<!-- r13 artboard -->
<path d="M8.300 347 H14.600 L17.800 350.200 V355.500 H8.300 Z" fill="#7a7a7a" stroke="none"/>
<path d="M7.600 341.500 V356 H18.400 V350 L14.900 346.500 H2.500" stroke-width="1.100" stroke-linecap="butt" stroke-linejoin="miter"/>
<!-- slice -->
<path d="M33 357 L41.500 346.500 L46.500 349.500 Z" stroke-width="1.100"/>
<path d="M41.500 346.500 L44 342.500 L48.500 345 L46.500 349.500 Z" fill="#cfcfcf" stroke="none"/>
<!-- r14 hand -->
<path d="M7.500 374 L8.500 367.800 M11.300 373 L11.500 365.800 M14.300 373.500 L15 366.800 M16.800 375 L18 369.800" stroke-width="2.300"/>
<path d="M8.500 377.500 L4.800 373" stroke-width="2.400"/>
<path d="M6.500 373.500 H17.800 C17.800 376.500 16.800 378.500 15.500 380.300 H8.800 C7.500 378.500 6.500 376.500 6.500 373.500 Z" fill="#cfcfcf" stroke="none"/>
<!-- zoom -->
<circle cx="38.500" cy="371" r="5" stroke-width="1.500"/>
<path d="M42.500 375 L47 379.500" stroke-width="2"/>
<!-- small triangles -->
<g fill="#cfcfcf" stroke="none">
<path d="M52 85.5 v3.200 h-3.200z"/>
<path d="M23.500 130.5 v3.200 h-3.200z"/>
<path d="M23.500 153.0 v3.200 h-3.200z"/><path d="M52 153.0 v3.200 h-3.200z"/>
<path d="M23.500 175.5 v3.200 h-3.200z"/><path d="M52 175.5 v3.200 h-3.200z"/>
<path d="M23.500 198.0 v3.200 h-3.200z"/><path d="M52 198.0 v3.200 h-3.200z"/>
<path d="M23.500 220.5 v3.200 h-3.200z"/><path d="M52 220.5 v3.200 h-3.200z"/>
<path d="M23.500 243.0 v3.200 h-3.200z"/><path d="M52 243.0 v3.200 h-3.200z"/>
<path d="M23.500 265.5 v3.200 h-3.200z"/><path d="M52 265.5 v3.200 h-3.200z"/>
<path d="M23.500 310.5 v3.200 h-3.200z"/>
<path d="M23.500 333.0 v3.200 h-3.200z"/><path d="M52 333.0 v3.200 h-3.200z"/>
<path d="M52 355.5 v3.200 h-3.200z"/>
<path d="M23.500 378.0 v3.200 h-3.200z"/>
</g>
</g>
<!-- separator -->
<rect x="0" y="385" width="52" height="1" fill="#3a3a3a"/>
<!-- fill / stroke -->
<rect x="-1" y="390.500" width="31.500" height="33" fill="#fff"/>
<path d="M-1 423 L30 391" stroke="#e02020" stroke-width="2"/>
<rect x="15" y="407.500" width="32.200" height="32.200" fill="url(#tg2)" stroke="#3a3a3a" stroke-width="0.800"/>
<rect x="24.200" y="417" width="14.800" height="14.800" fill="#4a4a4a" stroke="#333" stroke-width="0.800"/>
<path d="M41.500 394.500 C44.500 394 46.500 396 46.500 399" fill="none" stroke="#d4d4d4" stroke-width="1.600"/><path d="M39 394.500 L43.200 391.500 L43.200 397.500 Z M46.500 402.500 L43.500 398.500 L49.500 398.500 Z" fill="#d4d4d4"/>
<rect x="-1" y="428.500" width="6" height="6" fill="#fff" stroke="#222" stroke-width="1"/>
<rect x="2.500" y="432" width="6" height="6" fill="none" stroke="#111" stroke-width="1.500"/>
<!-- three buttons -->
<rect x="16" y="448.500" width="18.500" height="16" fill="#2e2e2e" rx="1"/>
<rect x="0.500" y="451" width="11.500" height="11.500" fill="#6e6e6e" stroke="#5a9a20" stroke-width="2"/>
<rect x="19.500" y="451" width="11.500" height="11.500" fill="url(#tg3)" stroke="#e8e8e8" stroke-width="1"/>
<rect x="38" y="451" width="12" height="11.500" fill="#fff"/>
<path d="M38.500 462 L49.500 451.500" stroke="#e02020" stroke-width="2.600"/>
<rect x="0" y="467" width="52" height="1" fill="#3a3a3a"/>
<!-- draw modes -->
<rect x="-1" y="470.500" width="53" height="16.500" fill="none" stroke="#555" stroke-width="1" rx="2"/>
<rect x="-1" y="470.500" width="16" height="16.500" fill="#2e2e2e" rx="1"/>
<path d="M34 471 v16" stroke="#555" stroke-width="1"/>
<g fill="none" stroke="#bdbdbd" stroke-width="1.100">
<circle cx="5.500" cy="477" r="3.500"/><rect x="6.500" y="478.500" width="5" height="5" fill="#bdbdbd" stroke="none"/>
<circle cx="24.500" cy="477" r="3.500"/><rect x="25.500" y="478.500" width="5" height="5" fill="#999" stroke="none"/>
<circle cx="43" cy="477.500" r="3.200" stroke="#999"/><rect x="43" y="477.500" width="3.500" height="3.500" fill="#999" stroke="none"/>
</g>
<!-- screen mode -->
<rect x="15.500" y="499.500" width="12" height="10.500" fill="#5a5a5a" stroke="#bdbdbd" stroke-width="1.100"/>
<rect x="23.500" y="495.500" width="12" height="10" fill="#5a5a5a" stroke="#bdbdbd" stroke-width="1.100"/>
<rect x="23.500" y="495.500" width="12" height="2" fill="#bdbdbd"/>
<g fill="#bdbdbd"><circle cx="20.500" cy="533" r="1.300"/><circle cx="25.500" cy="533" r="1.300"/><circle cx="30.500" cy="533" r="1.300"/></g>
</svg>

<!-- video overlay gradient -->
<div class="abs" style="left:0;top:392px;width:1216px;height:249px;pointer-events:none;background:linear-gradient(to bottom,rgba(0,0,0,0) 0%,rgba(0,0,0,0.035) 15.3%,rgba(0,0,0,0.235) 88.0%,rgba(0,0,0,0.265) 100%)"></div>
</div>
</body>
</html>
